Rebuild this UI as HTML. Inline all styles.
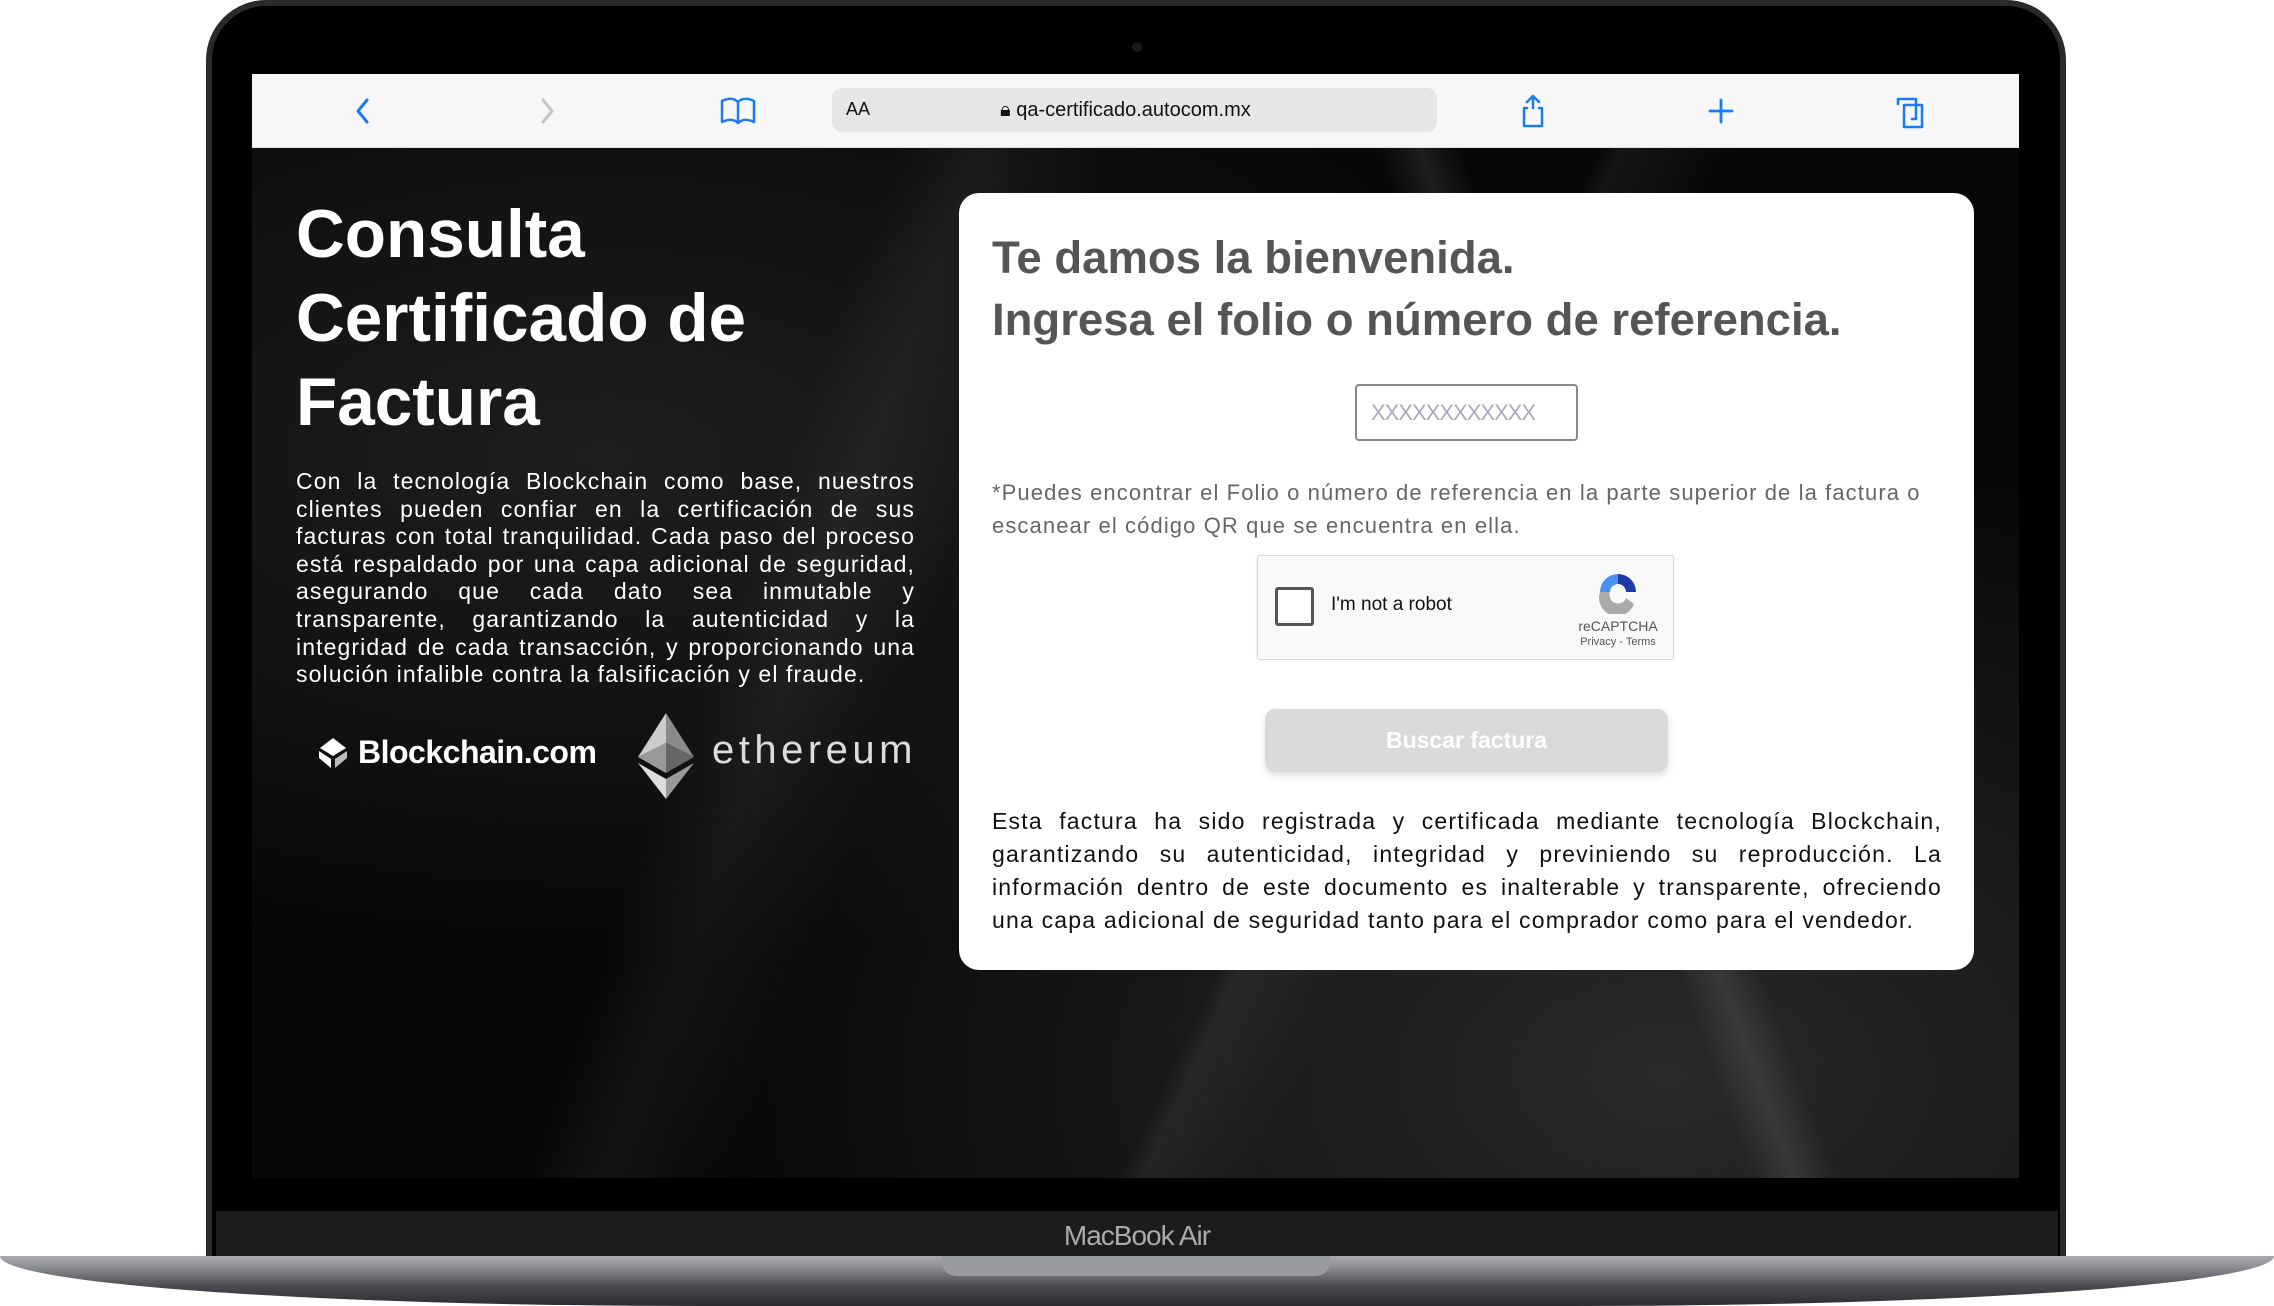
<!DOCTYPE html>
<html><head><meta charset="utf-8"><style>
*{margin:0;padding:0;box-sizing:border-box}
body{width:2274px;height:1306px;background:#fff;position:relative;overflow:hidden;font-family:"Liberation Sans",sans-serif}
.lid{position:absolute;left:206px;top:0;width:1860px;height:1270px;background:#2a2a2c;border-radius:60px 60px 0 0}
.bezel{position:absolute;left:212px;top:6px;width:1848px;height:1260px;background:#000;border-radius:54px 54px 0 0}
.cam{position:absolute;left:1132px;top:42px;width:10px;height:10px;border-radius:50%;background:#1a1a1a}
.chin{position:absolute;left:216px;top:1211px;width:1842px;height:50px;background:#1c1c1d;color:#aaa;font-size:28px;text-align:center;line-height:50px;letter-spacing:-1px}
.base{position:absolute;left:0;top:1256px;width:2274px;height:50px;background:linear-gradient(#a9aab0 0,#8a8b90 12px,#4a4b50 30px,#2b2c30 50px);border-radius:0 0 700px 700px/0 0 50px 50px}
.notch{position:absolute;left:942px;top:1256px;width:388px;height:20px;background:#9a9ba0;border-radius:0 0 14px 14px}
.screen{position:absolute;left:252px;top:74px;width:1767px;height:1104px;background:#050505;overflow:hidden}
.bar{position:absolute;left:0;top:0;width:1767px;height:74px;background:#f7f7f7;border-bottom:1px solid #ddd}
.url{position:absolute;left:580px;top:14px;width:605px;height:44px;background:#e6e6e6;border-radius:10px;font-size:20px;color:#111}
.bg{position:absolute;left:0;top:74px;width:1767px;height:1030px;background:
linear-gradient(115deg,transparent 60%,rgba(255,255,255,.06) 61%,transparent 66%),
linear-gradient(70deg,transparent 70%,rgba(255,255,255,.09) 72%,transparent 74%),
linear-gradient(110deg,transparent 30%,rgba(255,255,255,.05) 34%,transparent 40%),
radial-gradient(ellipse at 80% 90%,#2a2a2a,transparent 50%),
radial-gradient(ellipse at 20% 30%,#1e1e1e,transparent 50%),#070707}
.title{position:absolute;left:44px;top:45px;color:#fff;font-weight:bold;font-size:67.5px;line-height:84px}
.lp{position:absolute;left:44px;top:320px;width:619px;color:#fff;font-size:23px;letter-spacing:1.1px;line-height:27.6px;text-align:justify}
.card{position:absolute;left:707px;top:45px;width:1015px;height:777px;background:#fff;border-radius:20px}
.h{position:absolute;left:33px;top:34px;color:#555;font-weight:bold;font-size:45.5px;line-height:62px}
.inp{position:absolute;left:396px;top:191px;width:223px;height:57px;border:2px solid #888;border-radius:4px;color:#aab;font-size:22px;line-height:53px;padding-left:14px;letter-spacing:-1px}
.note{position:absolute;left:33px;top:283px;width:960px;color:#666;font-size:22px;letter-spacing:1.1px;line-height:33px}
.cap{position:absolute;left:298px;top:362px;width:417px;height:105px;background:#f9f9f9;border:1px solid #d6d6d6;border-radius:3px;box-shadow:0 0 3px rgba(0,0,0,.08)}
.btn{position:absolute;left:306px;top:516px;width:403px;height:63px;background:#dadada;border-radius:10px;color:#fff;font-weight:bold;font-size:23px;text-align:center;line-height:63px;box-shadow:0 4px 8px rgba(0,0,0,.12)}
.bp{position:absolute;left:33px;top:612px;width:950px;color:#111;font-size:23px;letter-spacing:1.2px;line-height:33px;text-align:justify}
</style></head><body>
<div class="lid"></div><div class="bezel"></div><div class="cam"></div>
<div class="screen">
 <div class="bar">
  <svg width="1767" height="74" style="position:absolute;left:0;top:0" fill="none" stroke-linecap="round" stroke-linejoin="round">
   <path d="M115 26 L106 37 L115 48" stroke="#1a7cf5" stroke-width="3"/>
   <path d="M291 26 L300 37 L291 48" stroke="#c4c4c4" stroke-width="3"/>
   <path d="M470 27 C476 24 482 24 486 28 C490 24 496 24 502 27 V48 C496 45 490 45 486 49 C482 45 476 45 470 48 Z M486 28 V49" stroke="#1a7cf5" stroke-width="2.5"/>
   <path d="M1281 34 V22 M1275 28 L1281 22 L1287 28 M1275 34 H1272 V52 H1290 V34 H1287" stroke="#1a7cf5" stroke-width="2.5"/>
   <path d="M1469 26 V48 M1458 37 H1480" stroke="#1a7cf5" stroke-width="2.8"/>
   <path d="M1646 30 V25 H1664 V45 H1660 M1652 31 H1670 V53 H1652 Z" stroke="#1a7cf5" stroke-width="2.5"/>
   <path d="M1171 30 A10 10 0 1 0 1176 38 M1171 24 V31 H1164" stroke="#222" stroke-width="2.2"/>
  </svg>
  <div class="url"><span style="position:absolute;left:14px;top:11px;font-size:18px">AA</span>
   <span style="position:absolute;left:168px;top:11px">&#128274;&#xFE0E; qa-certificado.autocom.mx</span></div>
 </div>
 <div class="bg">
  <div class="title">Consulta<br>Certificado de<br>Factura</div>
  <div class="lp">Con la tecnología Blockchain como base, nuestros clientes pueden confiar en la certificación de sus facturas con total tranquilidad. Cada paso del proceso está respaldado por una capa adicional de seguridad, asegurando que cada dato sea inmutable y transparente, garantizando la autenticidad y la integridad de cada transacción, y proporcionando una solución infalible contra la falsificación y el fraude.</div>
  <svg style="position:absolute;left:64px;top:588px" width="34" height="34" viewBox="0 0 34 34"><path d="M17 2 L30 12 L17 20 L4 12Z" fill="#fff"/><path d="M3 15 L15 23 V32 L3 22Z" fill="#fff"/><path d="M31 15 L19 23 V32 L31 22Z" fill="#bbb"/></svg>
  <div style="position:absolute;left:106px;top:586px;color:#fff;font-weight:bold;font-size:32px;letter-spacing:-.5px">Blockchain.com</div>
  <svg style="position:absolute;left:386px;top:565px" width="56" height="86" viewBox="0 0 56 86"><path d="M28 0 L56 44 L28 30Z" fill="#8a8a8a"/><path d="M28 0 L0 44 L28 30Z" fill="#ccc"/><path d="M28 30 L56 44 L28 60 L0 44Z" fill="#666"/><path d="M28 30 L0 44 L28 60Z" fill="#999"/><path d="M0 50 L28 86 V66Z" fill="#ddd"/><path d="M56 50 L28 86 V66Z" fill="#999"/></svg>
  <div style="position:absolute;left:460px;top:580px;color:#ddd;font-size:40px;letter-spacing:4.5px">ethereum</div>
  <div class="card">
   <div class="h">Te damos la bienvenida.<br>Ingresa el folio o número de referencia.</div>
   <div class="inp">XXXXXXXXXXXX</div>
   <div class="note">*Puedes encontrar el Folio o número de referencia en la parte superior de la factura o escanear el código QR que se encuentra en ella.</div>
   <div class="cap">
    <div style="position:absolute;left:17px;top:31px;width:39px;height:39px;border:3px solid #555;border-radius:3px;background:#fff"></div>
    <div style="position:absolute;left:73px;top:38px;font-size:19px;color:#111">I'm not a robot</div>
    <svg style="position:absolute;left:338px;top:14px" width="44" height="44" viewBox="0 0 44 44"><path d="M22 4 A18 18 0 0 1 40 22 H30 A8 8 0 0 0 22 14Z" fill="#1c3aa9"/><path d="M4 22 A18 18 0 0 1 22 4 V14 A8 8 0 0 0 14 22Z" fill="#4a90f0"/><path d="M4 22 H14 A8 8 0 0 0 30 28 L38 34 A18 18 0 0 1 4 22Z" fill="#aaa"/></svg>
    <div style="position:absolute;left:310px;top:62px;font-size:14px;color:#555;width:100px;text-align:center">reCAPTCHA</div>
    <div style="position:absolute;left:310px;top:80px;font-size:11px;color:#555;width:100px;text-align:center">Privacy - Terms</div>
   </div>
   <div class="btn">Buscar factura</div>
   <div class="bp">Esta factura ha sido registrada y certificada mediante tecnología Blockchain, garantizando su autenticidad, integridad y previniendo su reproducción. La información dentro de este documento es inalterable y transparente, ofreciendo una capa adicional de seguridad tanto para el comprador como para el vendedor.</div>
  </div>
 </div>
</div>
<div class="chin">MacBook Air</div>
<div class="base"></div><div class="notch"></div>
</body></html>
